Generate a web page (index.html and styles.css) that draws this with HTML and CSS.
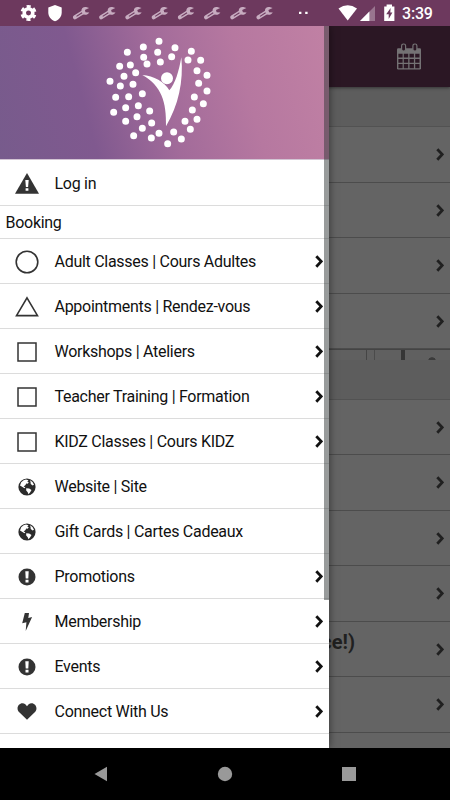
FILE: index.html
```html
<!DOCTYPE html>
<html lang="en">
<head>
<meta charset="utf-8">
<title>Menu</title>
<link rel="stylesheet" href="styles.css">
</head>
<body>
<svg class="defs" width="0" height="0">
  <defs>
    <symbol id="chev" viewBox="0 0 8 13"><path d="M1.3 1.2 6.2 6.4 1.3 11.7" fill="none" stroke="currentColor" stroke-width="2.8"/></symbol>
    <symbol id="wrench" viewBox="0 0 18 14"><path d="M2.5 11.3 8.6 7.4M3.2 10.9 10.5 6.2" fill="none" stroke="currentColor" stroke-width="4" stroke-linecap="round"/><path d="M16.6 2.1 13.6 1C10.9.6 8.7 2.2 9 4.8L9.8 8.1C12.5 9.5 15.2 8.9 16.8 6.4L13 6.2 12.4 3.9Z" fill="currentColor"/><path d="M4 10.4 9.6 6.8" stroke="#6d395e" stroke-width="1.1"/></symbol>
    <symbol id="warn" viewBox="0 0 24 21"><path d="M12 0 24 20.7H0Z" fill="#333"/><path d="M10.3 7h3.4l-.6 7h-2.2zM10.6 15.2h2.8v2.5h-2.8z" fill="#fff"/></symbol>
    <symbol id="circle" viewBox="0 0 24 24"><circle cx="12" cy="12" r="10.8" fill="none" stroke="#333" stroke-width="1.6"/></symbol>
    <symbol id="tri" viewBox="0 0 24 21"><path d="M12 1.8 22.5 19.6h-21Z" fill="none" stroke="#333" stroke-width="1.6"/></symbol>
    <symbol id="square" viewBox="0 0 20 20"><path d="M1 1h18v18H1z" fill="none" stroke="#333" stroke-width="1.5"/></symbol>
    <symbol id="globe" viewBox="0 0 18 18"><circle cx="9" cy="9" r="8.6" fill="#2b2b2b"/><path d="M3.2 4.3 5.6 2.2 8 1.5 10.5 2.2 9.3 3.4 10.8 4.5 9.6 5.8 8.2 5.6 7.5 7.1 5.6 8.4 7.4 9.3 6.4 10.2 4.1 8.7 2 7.4ZM12 2.3 14.5 4 16 6.8 14.6 7.4 12.7 6 12.6 4.2ZM8.2 10.3 11.2 10.4 13.5 12 12.2 14.3 10.5 16.2 9.7 14.2 8.2 12.4Z" fill="#fff"/></symbol>
    <symbol id="info" viewBox="0 0 18 18"><circle cx="9" cy="9" r="8.5" fill="#333"/><path d="M7.3 3.2h3.4l-.4 7.3H7.7zM7.5 11.8h3v2.7h-3z" fill="#fff"/></symbol>
    <symbol id="bolt" viewBox="0 0 12 18"><path d="M3.8 0H8L7.3 4.9 11.1 4 4.7 18 5.4 9.3 1.2 10.2Z" fill="#333"/></symbol>
    <symbol id="heart" viewBox="0 0 20 17"><path d="M10 16.8 2 9C-2.2 4.2 3.6-2.4 8.6 1.5L10 3.3 11.4 1.5C16.4-2.4 22.2 4.2 18 9Z" fill="#333"/></symbol>
  </defs>
</svg>
<div class="screen">
  <header class="status">
    <svg class="status-icons" width="450" height="26" viewBox="0 0 450 26">
      <circle cx="28.5" cy="13" r="4.3" fill="none" stroke="#fff" stroke-width="3.6"/>
      <circle cx="28.5" cy="13" r="6.6" fill="none" stroke="#fff" stroke-width="2.8" stroke-dasharray="3.9 3.01" stroke-dashoffset="1.95" transform="rotate(30 28.5 13)"/>
      <path d="M55 4.9 61.7 7.5V12.5C61.7 16.8 58.8 20 55 21.2 51.2 20 48.3 16.8 48.3 12.5V7.5Z" fill="#fff"/>
      <g color="#c7acc0">
        <use href="#wrench" x="72.5" y="6" width="18" height="14"/>
        <use href="#wrench" x="98.7" y="6" width="18" height="14"/>
        <use href="#wrench" x="124.9" y="6" width="18" height="14"/>
        <use href="#wrench" x="151.2" y="6" width="18" height="14"/>
        <use href="#wrench" x="177.4" y="6" width="18" height="14"/>
        <use href="#wrench" x="203.6" y="6" width="18" height="14"/>
        <use href="#wrench" x="229.8" y="6" width="18" height="14"/>
        <use href="#wrench" x="256" y="6" width="18" height="14"/>
      </g>
      <path d="M299 11.7h2.4v2.4H299zM305.2 11.7h2.4v2.4h-2.4z" fill="#fff"/>
      <path d="M338.5 8.4Q347.7 2 357 8.4L347.7 20.5Z" fill="#fff"/>
      <path d="M375 6V21H360Z" fill="#99758f"/><path d="M369.4 11.6V21H360Z" fill="#fff"/>
      <path d="M386.6 4.5h5.4v2h2.4v14.6h-10.2V6.5h2.4z" fill="#fff"/>
      <path d="M390.6 8 386.2 14.2H388.7V19L392.4 12.5H390.3Z" fill="#6d395e"/>
    </svg>
    <span class="clock">3:39</span>
  </header>
  <div class="app">
    <main class="page">
      <div class="topbar">
        <svg width="26" height="28" viewBox="0 0 26 28"><path d="M2.2 5.2H23.8Q25 5.2 25 6.5V25.3Q25 26.6 23.8 26.6H2.2Q1 26.6 1 25.3V6.5Q1 5.2 2.2 5.2Z" fill="#747274"/><path d="M2.4 10.7h4.2v3.8H2.4zM7.8 10.7h4.4v3.8H7.8zM13.5 10.7h4.4v3.8h-4.4zM19.2 10.7h4.3v3.8h-4.3zM2.4 15.9h4.2v3.8H2.4zM7.8 15.9h4.4v3.8H7.8zM13.5 15.9h4.4v3.8h-4.4zM19.2 15.9h4.3v3.8h-4.3zM2.4 21.1h4.2v4.2H2.4zM7.8 21.1h4.4v4.2H7.8zM13.5 21.1h4.4v4.2h-4.4zM19.2 21.1h4.3v4.2h-4.3z" fill="#2b1724"/><g fill="#2b1724" stroke="#747274" stroke-width="1.2"><rect x="5.6" y="1" width="4" height="7" rx="1.8"/><rect x="16.9" y="1" width="4" height="7" rx="1.8"/></g></svg>
      </div>
      <div class="band band-first"></div>
      <div class="cell"><svg class="chev"><use href="#chev"/></svg></div>
      <div class="cell"><svg class="chev"><use href="#chev"/></svg></div>
      <div class="cell"><svg class="chev"><use href="#chev"/></svg></div>
      <div class="cell"><svg class="chev"><use href="#chev"/></svg></div>
      <div class="wood"></div>
      <div class="band"></div>
      <div class="cell"><svg class="chev"><use href="#chev"/></svg></div>
      <div class="cell"><svg class="chev"><use href="#chev"/></svg></div>
      <div class="cell"><svg class="chev"><use href="#chev"/></svg></div>
      <div class="cell"><svg class="chev"><use href="#chev"/></svg></div>
      <div class="cell"><strong class="cell-title">ce!)</strong><svg class="chev"><use href="#chev"/></svg></div>
      <div class="cell"><svg class="chev"><use href="#chev"/></svg></div>
      <div class="cell"></div>
    </main>
    <nav class="drawer">
      <div class="brand">
        <svg width="125" height="125" viewBox="0 0 375 375" fill="#fff">
          <g stroke="#fff" stroke-width="21" stroke-linecap="round"><path d="M192 34h.01M145 51h.01M97 67h.01M240 53h.01M289 64h.01M188 67h.01M146 82h.01M230 80h.01M196 96h.01M156 102h.01M279 90h.01M317 91h.01M74 109h.01M106 105h.01M122 128h.01M87 139h.01M306 122h.01M336 136h.01M45 154h.01M76 168h.01M114 163h.01M311 160h.01M336 183h.01M62 202h.01M101 200h.01M142 191h.01M298 201h.01M325 221h.01M56 247h.01M92 233h.01M130 227h.01M164 243h.01M292 240h.01M306 268h.01M92 274h.01M126 260h.01M170 279h.01M142 295h.01M270 274h.01M286 298h.01M116 317h.01M169 324h.01M192 310h.01M236 306h.01M259 327h.01M218 341h.01"/></g>
          <circle cx="216" cy="145" r="20.5" stroke="#a0699a" stroke-width="5"/>
          <path d="M142 135C176 138 209 155 223 181 240 163 252 123 259 82 266 154 250 227 213 289 215 217 199 166 142 135Z"/>
        </svg>
      </div>
      <a class="item"><span class="ico"><svg width="24" height="21"><use href="#warn"/></svg></span><span>Log in</span></a>
      <div class="section">Booking</div>
      <a class="item"><span class="ico"><svg width="24" height="24"><use href="#circle"/></svg></span><span>Adult Classes | Cours Adultes</span><svg class="chev"><use href="#chev"/></svg></a>
      <a class="item"><span class="ico"><svg width="24" height="21"><use href="#tri"/></svg></span><span>Appointments | Rendez-vous</span><svg class="chev"><use href="#chev"/></svg></a>
      <a class="item"><span class="ico"><svg width="20" height="20"><use href="#square"/></svg></span><span>Workshops | Ateliers</span><svg class="chev"><use href="#chev"/></svg></a>
      <a class="item"><span class="ico"><svg width="20" height="20"><use href="#square"/></svg></span><span>Teacher Training | Formation</span><svg class="chev"><use href="#chev"/></svg></a>
      <a class="item"><span class="ico"><svg width="20" height="20"><use href="#square"/></svg></span><span>KIDZ Classes | Cours KIDZ</span><svg class="chev"><use href="#chev"/></svg></a>
      <a class="item"><span class="ico"><svg width="18" height="18"><use href="#globe"/></svg></span><span>Website | Site</span></a>
      <a class="item"><span class="ico"><svg width="18" height="18"><use href="#globe"/></svg></span><span>Gift Cards | Cartes Cadeaux</span></a>
      <a class="item"><span class="ico"><svg width="18" height="18"><use href="#info"/></svg></span><span>Promotions</span><svg class="chev"><use href="#chev"/></svg></a>
      <a class="item"><span class="ico"><svg width="12" height="18"><use href="#bolt"/></svg></span><span>Membership</span><svg class="chev"><use href="#chev"/></svg></a>
      <a class="item"><span class="ico"><svg width="18" height="18"><use href="#info"/></svg></span><span>Events</span><svg class="chev"><use href="#chev"/></svg></a>
      <a class="item"><span class="ico"><svg width="20" height="17"><use href="#heart"/></svg></span><span>Connect With Us</span><svg class="chev"><use href="#chev"/></svg></a>
      <div class="scrollbar"></div>
    </nav>
  </div>
  <footer class="navbar">
    <svg width="14" height="16"><path d="M0.5 8 13 .8V15.2Z" fill="#999"/></svg>
    <svg width="16" height="16"><circle cx="8" cy="8" r="7.2" fill="#999"/></svg>
    <svg width="14" height="14"><path d="M0 0h14v14H0z" fill="#999"/></svg>
  </footer>
</div>
</body>
</html>
```
FILE: styles.css
```css
* { box-sizing: border-box; }
body { margin: 0; font-family: Roboto, "Liberation Sans", sans-serif; }
svg { display: block; flex: none; }
.defs { position: absolute; }
.screen { width: 450px; height: 800px; display: flex; flex-direction: column; overflow: hidden; background: #000; }

.status { height: 26px; background: #6d395e; display: flex; align-items: center; position: relative; }
.status-icons { position: absolute; left: 0; top: 0; }
.clock { margin-left: 402px; color: #fff; font-size: 16px; letter-spacing: -.2px; line-height: 26px; font-weight: 500; position: relative; top: 1px; }

.app { height: 722px; position: relative; overflow: hidden; }
.page { height: 722px; overflow: hidden; background: #646464; color: #202020; }
.topbar { height: 61px; background: #2b1724; display: flex; justify-content: flex-end; padding: 17px 28px 0 0; box-shadow: 0 1px 3px rgba(0,0,0,.45); position: relative; }
.band { height: 39.5px; background: #5d5d5d; border-bottom: 1px solid #525252; }
.band-first { height: 40px; }
.cell { height: 55.5px; border-bottom: 1px solid #4c4c4c; display: flex; align-items: center; justify-content: flex-end; padding: 1px 6px 0 0; }
.cell-title { margin-right: 81px; font-size: 20px; line-height: 24px; padding-bottom: 15px; }
.wood { height: 11px; border-top: 1px solid #444; background: linear-gradient(90deg, transparent 366px, #454545 366px 367px, transparent 367px 374px, #4b4b4b 374px 375px, transparent 375px 401px, #363636 401px 405px, transparent 405px), radial-gradient(ellipse 4px 3px at 432px 10px, #3b3b3b 80%, transparent), #606060; }
.chev { width: 8px; height: 13px; margin-left: auto; }
.cell .chev { margin-left: 0; }

.drawer { position: absolute; left: 0; top: 0; width: 328.5px; height: 722px; overflow: hidden; background: #fff; box-shadow: 0 0 8px rgba(0,0,0,.5); color: #111; }
.brand { height: 134px; padding: 4px 0 0 95px; background: linear-gradient(75deg, #775b8c 0%, #80598f 27%, #a26b9a 50%, #b678a0 73%, #c181a4 100%); border-bottom: 1px solid #d3c5d4; }
.item { height: 45px; display: flex; align-items: center; padding: 1px 6px 0 0; border-bottom: 1px solid #dcdcdc; font-size: 16px; letter-spacing: -.28px; white-space: nowrap; }
.brand + .item { height: 46px; padding-top: 2px; }
.ico { width: 54.5px; display: flex; justify-content: center; }
.section { height: 33px; border-bottom: 1px solid #dcdcdc; padding-left: 5.5px; font-size: 16px; letter-spacing: -.28px; line-height: 34px; }
.scrollbar { position: absolute; right: 0; top: 0; width: 4.5px; height: 573.5px; background: rgba(50,55,55,.5); }

.navbar { height: 52px; background: #000; display: flex; justify-content: space-between; align-items: center; padding: 0 94px 0 93.5px; }
```
